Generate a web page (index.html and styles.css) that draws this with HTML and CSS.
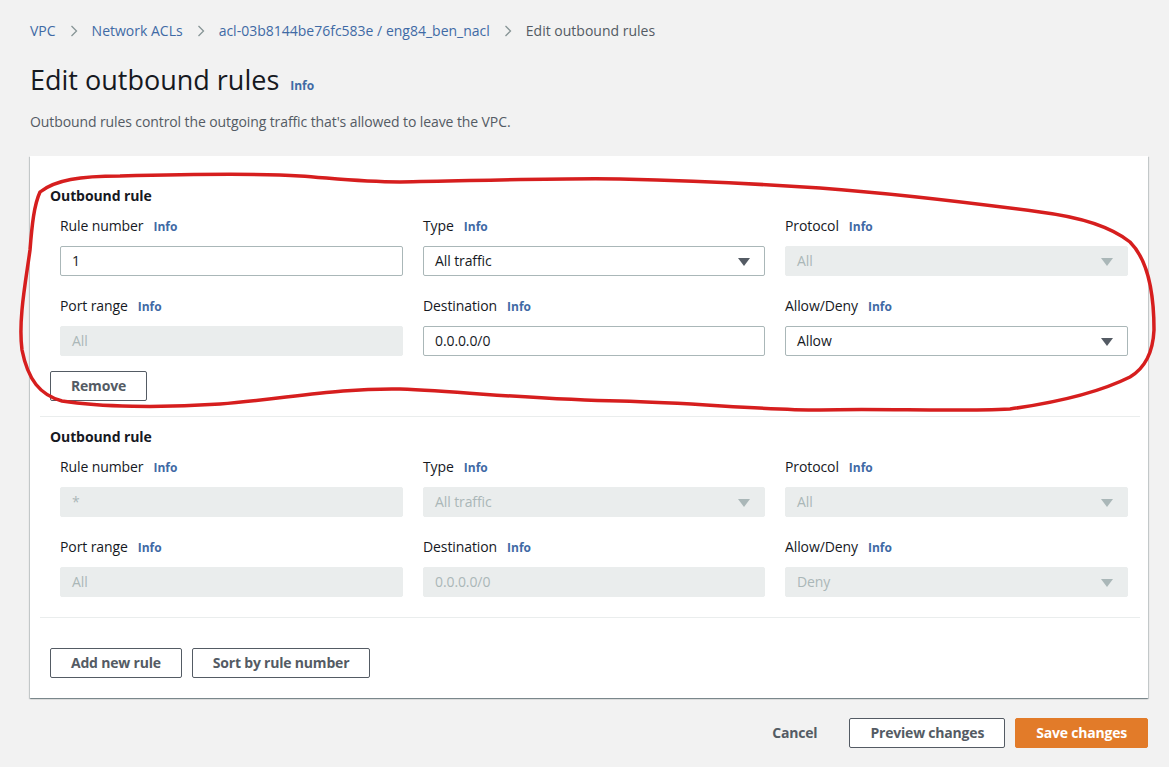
FILE: index.html
```html
<!DOCTYPE html>
<html lang="en">
<head>
<meta charset="utf-8">
<title>Edit outbound rules</title>
<link rel="stylesheet" href="styles.css">
</head>
<body>
<div class="page">
  <nav class="breadcrumbs">
    <a class="crumb" href="#">VPC</a>
    <span class="sep"><svg width="8" height="12" viewBox="0 0 8 12"><path d="M1.5 1 L6.5 6 L1.5 11" fill="none" stroke="#879596" stroke-width="1.3"/></svg></span>
    <a class="crumb" href="#">Network ACLs</a>
    <span class="sep"><svg width="8" height="12" viewBox="0 0 8 12"><path d="M1.5 1 L6.5 6 L1.5 11" fill="none" stroke="#879596" stroke-width="1.3"/></svg></span>
    <a class="crumb" href="#">acl-03b8144be76fc583e / eng84_ben_nacl</a>
    <span class="sep"><svg width="8" height="12" viewBox="0 0 8 12"><path d="M1.5 1 L6.5 6 L1.5 11" fill="none" stroke="#879596" stroke-width="1.3"/></svg></span>
    <span class="crumb current">Edit outbound rules</span>
  </nav>

  <header class="page-header">
    <h1 class="title">Edit outbound rules</h1>
    <a class="info" href="#">Info</a>
  </header>
  <p class="description">Outbound rules control the outgoing traffic that's allowed to leave the VPC.</p>

  <section class="card">
    <div class="rule">
      <h2 class="rule-title">Outbound rule</h2>
      <div class="fields">
        <div class="field">
          <div class="label">Rule number<a class="info" href="#">Info</a></div>
          <div class="control">1</div>
        </div>
        <div class="field">
          <div class="label">Type<a class="info" href="#">Info</a></div>
          <div class="control select">All traffic<span class="caret"></span></div>
        </div>
        <div class="field">
          <div class="label">Protocol<a class="info" href="#">Info</a></div>
          <div class="control select disabled">All<span class="caret"></span></div>
        </div>
        <div class="field">
          <div class="label">Port range<a class="info" href="#">Info</a></div>
          <div class="control disabled">All</div>
        </div>
        <div class="field">
          <div class="label">Destination<a class="info" href="#">Info</a></div>
          <div class="control">0.0.0.0/0</div>
        </div>
        <div class="field">
          <div class="label">Allow/Deny<a class="info" href="#">Info</a></div>
          <div class="control select">Allow<span class="caret"></span></div>
        </div>
      </div>
      <div class="rule-actions">
        <button class="btn">Remove</button>
      </div>
    </div>

    <div class="rule rule-readonly">
      <h2 class="rule-title">Outbound rule</h2>
      <div class="fields">
        <div class="field">
          <div class="label">Rule number<a class="info" href="#">Info</a></div>
          <div class="control disabled">*</div>
        </div>
        <div class="field">
          <div class="label">Type<a class="info" href="#">Info</a></div>
          <div class="control select disabled">All traffic<span class="caret"></span></div>
        </div>
        <div class="field">
          <div class="label">Protocol<a class="info" href="#">Info</a></div>
          <div class="control select disabled">All<span class="caret"></span></div>
        </div>
        <div class="field">
          <div class="label">Port range<a class="info" href="#">Info</a></div>
          <div class="control disabled">All</div>
        </div>
        <div class="field">
          <div class="label">Destination<a class="info" href="#">Info</a></div>
          <div class="control disabled">0.0.0.0/0</div>
        </div>
        <div class="field">
          <div class="label">Allow/Deny<a class="info" href="#">Info</a></div>
          <div class="control select disabled">Deny<span class="caret"></span></div>
        </div>
      </div>
    </div>

    <div class="card-actions">
      <button class="btn">Add new rule</button>
      <button class="btn">Sort by rule number</button>
    </div>
  </section>

  <footer class="form-actions">
    <button class="btn btn-link">Cancel</button>
    <button class="btn">Preview changes</button>
    <button class="btn btn-primary">Save changes</button>
  </footer>
</div>

<svg class="annotation" width="1169" height="767" viewBox="0 0 1169 767">
  <path d="M40 192 C 55 180, 80 176, 120 176 C 200 174, 270 174, 300 176 C 330 178, 360 182, 400 182 C 470 181, 550 178, 620 179 C 700 181, 760 184, 820 188 C 900 194, 980 204, 1040 212 C 1080 217, 1110 226, 1130 242 C 1150 262, 1154 300, 1154 330 C 1153 352, 1145 368, 1130 377 C 1100 392, 1060 402, 1010 409 C 950 412, 880 408, 820 410 C 760 410, 700 403, 620 401 C 540 400, 470 392, 400 389 C 340 388, 290 398, 220 404 C 160 408, 100 407, 62 401 C 40 395, 28 380, 22 350 C 18 320, 26 280, 30 250 C 32 225, 34 205, 40 192 Z" fill="none" stroke="#d61e1e" stroke-width="3.5" stroke-linejoin="round"/>
</svg>
</body>
</html>
```

FILE: styles.css
```css
* { box-sizing: border-box; }

html, body {
  margin: 0;
  padding: 0;
  background: #f2f2f2;
}

body {
  font-family: "Open Sans", "Liberation Sans", sans-serif;
  font-size: 14px;
  line-height: 20px;
  letter-spacing: -0.1px;
  color: #16191f;
  position: relative;
  width: 1169px;
  height: 767px;
  overflow: hidden;
}

.page {
  padding: 21px 21px 0 30px;
}

a { text-decoration: none; }

.breadcrumbs {
  display: flex;
  align-items: center;
  height: 20px;
  letter-spacing: 0;
}

.crumb { color: #3f6aa5; }
.crumb.current { color: #545b64; }

.sep {
  display: inline-flex;
  align-items: center;
  margin: 0 14px;
}

.page-header {
  display: flex;
  align-items: baseline;
  margin-top: 21px;
}

.title {
  margin: 0;
  font-size: 27px;
  line-height: 36px;
  font-weight: 400;
  letter-spacing: 0;
  color: #16191f;
}

.info {
  color: #3f6aa5;
  font-size: 12px;
  font-weight: 700;
  letter-spacing: 0;
  margin-left: 10px;
}

.page-header .info { margin-left: 11px; }

.description {
  margin: 14px 0 0;
  color: #545b64;
}

.card {
  margin-top: 24px;
  background: #fff;
  box-shadow: 0 1px 1px 0 rgba(0, 28, 36, 0.3), 1px 1px 1px 0 rgba(0, 28, 36, 0.15), -1px 1px 1px 0 rgba(0, 28, 36, 0.15);
  padding: 20px 8px 20px 10px;
}

.rule {
  padding: 10px 0 15px 10px;
  border-bottom: 1px solid #eaeded;
}

.rule + .rule { padding-top: 10px; }

.rule-readonly { padding-bottom: 20px; }

.rule-title {
  margin: 0;
  font-size: 14px;
  line-height: 20px;
  font-weight: 700;
}

.fields {
  display: grid;
  grid-template-columns: 343px 342px 343px;
  column-gap: 20px;
  row-gap: 20px;
  margin: 10px 12px 0 10px;
}

.field {
  display: flex;
  flex-direction: column;
  gap: 10px;
}

.label {
  color: #16191f;
  height: 20px;
}

.control {
  position: relative;
  height: 30px;
  padding: 4px 11px;
  border: 1px solid #aab7b8;
  border-radius: 2px;
  background: #fff;
  color: #16191f;
  line-height: 20px;
}

.control.disabled {
  background: #eaeded;
  border-color: #eaeded;
  color: #aab7b8;
}

.caret {
  position: absolute;
  right: 14px;
  top: 11px;
  width: 0;
  height: 0;
  border-left: 6px solid transparent;
  border-right: 6px solid transparent;
  border-top: 8px solid #545b64;
}

.disabled .caret { border-top-color: #aab7b8; }

.rule-actions {
  margin-top: 15px;
  display: flex;
}

.btn {
  font-family: inherit;
  font-size: 14px;
  line-height: 20px;
  font-weight: 700;
  letter-spacing: -0.2px;
  color: #545b64;
  background: #fff;
  border: 1px solid #545b64;
  border-radius: 2px;
  padding: 4px 20px;
  height: 30px;
  cursor: pointer;
}

.card-actions {
  display: flex;
  gap: 10px;
  padding: 30px 0 0 10px;
}

.form-actions {
  display: flex;
  justify-content: flex-end;
  gap: 10px;
  margin-top: 20px;
}

.btn-link {
  background: transparent;
  border-color: transparent;
  margin-right: 1px;
}

.btn-primary {
  background: #e27b29;
  border-color: #e27b29;
  color: #fff;
}

.annotation {
  position: absolute;
  left: 0;
  top: 0;
  pointer-events: none;
}
```
